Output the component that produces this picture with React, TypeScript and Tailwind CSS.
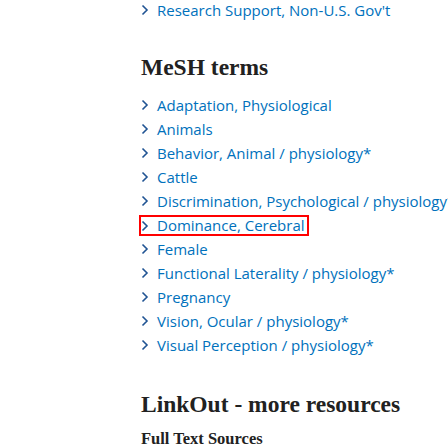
import React from "react";

const terms = [
  "Adaptation, Physiological",
  "Animals",
  "Behavior, Animal / physiology*",
  "Cattle",
  "Discrimination, Psychological / physiology*",
  "Dominance, Cerebral",
  "Female",
  "Functional Laterality / physiology*",
  "Pregnancy",
  "Vision, Ocular / physiology*",
  "Visual Perception / physiology*",
];

function Chevron() {
  return (
    <svg width="8" height="12" viewBox="0 0 8 12" className="shrink-0">
      <path d="M1.5 1.5 L6 6 L1.5 10.5" fill="none" stroke="#205493" strokeWidth="1.6" />
    </svg>
  );
}

function Row({ text, boxed }: { text: string; boxed?: boolean }) {
  return (
    <div className="h-6 flex items-center">
      <div
        className={
          boxed
            ? "flex items-center gap-[8px] h-[21px] border-2 border-[#ff0000] pr-[2px] -ml-[2px] pl-0 mt-[1px]"
            : "flex items-center gap-[8px]"
        }
      >
        <Chevron />
        <span className="text-[15px] text-[#0071bc] whitespace-nowrap">{text}</span>
      </div>
    </div>
  );
}

const serif = { fontFamily: '"Liberation Serif", serif' };

export default function App() {
  return (
    <div
      className="w-[448px] h-[448px] overflow-hidden bg-white pl-[141px]"
      style={{ fontFamily: '"Open Sans", sans-serif' }}
    >
      <div className="-mt-[2px]">
        <Row text="Research Support, Non-U.S. Gov't" />
      </div>
      <h2 className="mt-[31px] text-[23.5px] font-bold text-[#212121] leading-[28px] whitespace-nowrap" style={serif}>
        MeSH terms
      </h2>
      <div className="mt-[12px]">
        {terms.map((t) => (
          <Row key={t} text={t} boxed={t === "Dominance, Cerebral"} />
        ))}
      </div>
      <h2 className="mt-[33px] text-[23.5px] font-bold text-[#212121] leading-[28px] whitespace-nowrap" style={serif}>
        LinkOut - more resources
      </h2>
      <h3 className="mt-[9px] text-[16.5px] leading-6 font-bold text-[#212121] whitespace-nowrap" style={serif}>
        Full Text Sources
      </h3>
    </div>
  );
}
